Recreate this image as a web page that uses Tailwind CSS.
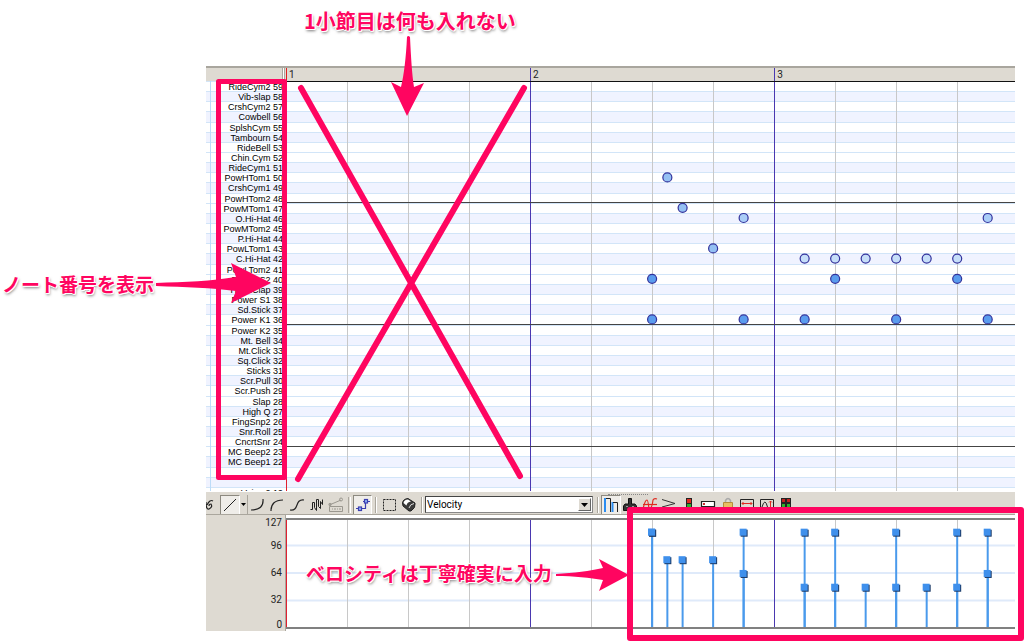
<!DOCTYPE html>
<html lang="ja">
<head>
    <meta charset="UTF-8">
    <meta name="viewport" content="width=device-width, initial-scale=1.0">
    <title>ドラムの打ち込み</title>
    <script src="https://cdn.jsdelivr.net/npm/@tailwindcss/browser@4"></script>
</head>
<body class="relative min-h-screen bg-white overflow-hidden font-['Roboto','Noto_Sans_CJK_JP',sans-serif] text-[#222]">

    <main class="ml-[206px] mr-[9px] pt-[66px]">

        <!-- Ruler -->
        <header class="flex h-[15px] bg-[#dedad2] border-t-2 border-[#a9a69e] text-[10px] leading-[13px]">
            <div class="w-20 shrink-0 flex justify-end pr-px">
                <span class="w-[3px] border-x border-x-[#aaa69d] bg-white"></span>
            </div>
            <div class="grow flex overflow-hidden">
                <span class="w-[33.48%] shrink-0 border-l border-[#e02020] pl-[2px]">1</span>
                <span class="w-[33.48%] shrink-0 border-l border-[#4a38b0] pl-[2px]">2</span>
                <span class="w-[33.48%] shrink-0 border-l border-[#4a38b0] pl-[2px]">3</span>
            </div>
        </header>

        <!-- Piano roll -->
        <section class="relative isolate h-[410px] overflow-hidden">
            <ul id="rows" class="h-[416px] grid grid-rows-[repeat(41,minmax(0,1fr))]"></ul>
            <div class="absolute inset-y-0 left-1 w-px bg-[#bcdcf8]"></div>
            <div class="absolute top-0 left-20 right-0 h-[416px]">
                <svg id="roll" class="block w-full h-full"></svg>
            </div>
        </section>

        <!-- Toolbar -->
        <div class="relative flex h-6 pt-[3px] items-center bg-[#dedad2] border-t border-t-white border-b border-b-[#aaa69d] overflow-hidden">
            <div class="absolute top-[2px] left-[402px] w-[40px] border-t border-dotted border-[#888]"></div>
            <button aria-label="Freehand" class="w-3 mr-[2px] h-5 shrink-0">
                <svg class="block w-3 h-5" viewBox="0 0 12 20" fill="none" stroke="#222" stroke-width="1.2"><path d="M0 7 Q0 15 3 14 Q7 12 5 9 Q3 9 3 11 M1 10 Q4 4 7 6"/></svg>
            </button>
            <button aria-label="Line" class="w-5 h-5 shrink-0 bg-[#efede9] border border-t-[#8c8980] border-l-[#8c8980] border-white">
                <svg class="block w-[18px] h-[18px]" viewBox="0 0 18 18" stroke="#222" stroke-width="1"><path d="M3 15 L15 3"/></svg>
            </button>
            <button aria-label="Line options" class="w-2 h-5 shrink-0 border-r border-[#aaa69d] flex items-center justify-center">
                <svg class="w-[5px] h-[3px]" viewBox="0 0 5 3"><path d="M0 0 H5 L2.5 3Z"/></svg>
            </button>
            <div class="grid grid-cols-5 w-[98px] h-5 shrink-0">
                <button aria-label="Curve in"><svg class="block mx-auto w-[18px] h-5" viewBox="0 0 18 20" fill="none" stroke="#222" stroke-width="1.2"><path d="M2 15 Q15 15 14 4"/></svg></button>
                <button aria-label="Curve out"><svg class="block mx-auto w-[18px] h-5" viewBox="0 0 18 20" fill="none" stroke="#222" stroke-width="1.2"><path d="M3 16 Q3 5 15 5"/></svg></button>
                <button aria-label="S curve"><svg class="block mx-auto w-[18px] h-5" viewBox="0 0 18 20" fill="none" stroke="#222" stroke-width="1.2"><path d="M2 15 C12 16 6 4 16 5"/></svg></button>
                <button aria-label="Random"><svg class="block mx-auto w-[18px] h-5" viewBox="0 0 18 20" fill="none" stroke="#222"><path d="M2.500 14.500 H4.500 V7.500 H6.500 V12.500 L8.500 15.500 V4.500 H10.500 V11.500 L12.500 13.500 V6.500 L14.500 9.500 V4.500"/></svg></button>
                <button aria-label="Edit list" disabled><svg class="block mx-auto w-[18px] h-5" viewBox="0 0 18 20" fill="none" stroke="#9a978f"><path d="M2.500 11.500 H15.500 V16.500 H2.500Z M2 10 L7 8 L14 5"/><circle cx="3" cy="9.500" r="1.200"/><circle cx="14" cy="4.500" r="1.500"/><path d="M5 14 H6 M8 13 V15 M10 14 H11 M13 13 V15"/></svg></button>
            </div>
            <span class="mx-[2px] w-[3px] h-4 shrink-0 border-x border-l-[#aaa69d] border-r-white"></span>
            <button aria-label="Connect" class="w-[19px] h-5 shrink-0 bg-[#efede9] border border-t-[#8c8980] border-l-[#8c8980] border-white">
                <svg class="block w-[17px] h-[18px]" viewBox="0 0 17 18" fill="none" stroke="#3b3fb0" stroke-width="1.2"><path d="M2 12.500 H5 M8 12.500 H11.500 V7 M13 5.500 H16 M9 5.500 H11"/><rect x="4.500" y="11" width="3" height="3.500" fill="#8fb4f8"/><rect x="10.500" y="3.500" width="3" height="3.500" fill="#8fb4f8"/></svg>
            </button>
            <span class="mx-[3px] w-[2px] h-4 shrink-0 border-x border-l-[#aaa69d] border-r-white"></span>
            <div class="grid grid-cols-2 w-[39px] h-5 shrink-0">
                <button aria-label="Select"><svg class="block mx-auto w-[18px] h-5" viewBox="0 0 18 20" fill="none" stroke="#222" stroke-dasharray="2 1"><rect x="2.500" y="4.500" width="12" height="11"/></svg></button>
                <button aria-label="Erase"><svg class="block mx-auto w-[18px] h-5" viewBox="0 0 18 20" stroke="#222"><path d="M2.500 8 Q3 4 8 3.500 L15 8 Q16 13 11 16 L9 16 L3 11Z" fill="#3a3a3a"/><path d="M3.500 8 Q4 4.500 8 4.500 L11 6.500 Q7 7 6.500 10.500Z" fill="#fff" stroke="none"/><path d="M9 13 Q10 9 14 8.500" fill="none" stroke="#ddd"/></svg></button>
            </div>
            <span class="mx-[2px] w-[2px] h-4 shrink-0 border-x border-l-[#aaa69d] border-r-white"></span>
            <div class="relative w-[168px] h-[17px] shrink-0">
                <label for="lane" class="sr-only">Controller</label>
                <select id="lane" class="block appearance-none w-full h-full bg-white border border-[#888] border-t-[#444] border-l-[#444] pl-px text-[10px] leading-[13px] text-black">
                    <option>Velocity</option>
                </select>
                <span class="absolute right-[2px] top-[2px] w-[13px] h-[13px] bg-[#dedad2] border border-[#fff] border-r-[#666] border-b-[#666] flex items-center justify-center pointer-events-none">
                    <svg class="w-[7px] h-1" viewBox="0 0 7 4"><path d="M0 0 H7 L3.500 4Z"/></svg>
                </span>
            </div>
            <span class="ml-1 mr-[2px] w-[2px] h-4 shrink-0 border-x border-l-[#aaa69d] border-r-white"></span>
            <div class="grid grid-cols-10 w-[195px] h-5 shrink-0">
                <button aria-label="Velocity lane" class="bg-[#efede9] border border-t-[#8c8980] border-l-[#8c8980] border-white"><svg class="block mx-auto w-[18px] h-[18px]" viewBox="0 0 18 18" fill="none"><path d="M3 16 V2" stroke="#2a8cf0" stroke-width="2"/><path d="M4 2.500 H8.500 V16" stroke="#222"/><path d="M10.500 16 V6" stroke="#2a8cf0" stroke-width="2"/><path d="M11 6.500 H15.500 V16" stroke="#222"/></svg></button>
                <button aria-label="Pitch bend"><svg class="block mx-auto w-[18px] h-5" viewBox="0 0 18 20" fill="#333" stroke="#111"><path d="M7.500 3.500 H10.500 V9 H14 L15.500 11 V15.500 H2.500 V11 L4 9 H7.500Z"/><path d="M5 11.500 H7 M11 11.500 H13" stroke="#999"/></svg></button>
                <button aria-label="Modulation"><svg class="block mx-auto w-[18px] h-5" viewBox="0 0 18 20" fill="none" stroke="#e02a20" stroke-width="1.200"><path d="M2 14 Q4 5 6 5 Q7 5 8 14 Q11 14 12 5 Q13 3 16 4"/><path d="M2 9.500 H16"/></svg></button>
                <button aria-label="Volume"><svg class="block mx-auto w-[18px] h-5" viewBox="0 0 18 20" fill="none" stroke="#333"><path d="M2 4.500 L15 8.500 L2 12"/></svg></button>
                <button aria-label="Level"><svg class="block mx-auto w-[18px] h-5" viewBox="0 0 18 20"><path d="M6 3 H12 V18 H6Z" fill="#222"/><path d="M7 4 H11 V8 H7Z" fill="#e02a20"/><path d="M7 9 H11 V16 H7Z" fill="#2bb32b"/></svg></button>
                <button aria-label="Pan"><svg class="block mx-auto w-[18px] h-5" viewBox="0 0 18 20" fill="#fff" stroke="#222" stroke-width="1.200"><path d="M2.500 6.500 H15.500 V11.500 H2.500Z"/><path d="M4 8 H6 V10 H4Z" fill="#cc3030" stroke="none"/></svg></button>
                <button aria-label="Lock"><svg class="block mx-auto w-[18px] h-5" viewBox="0 0 18 20" fill="#e8bd62" stroke="#b58a3a"><path d="M6.500 8 V5.500 Q9 1.500 11.500 5.500 V8" fill="none" stroke="#aaa" stroke-width="1.500"/><path d="M4.500 7.500 H13.500 V14.500 H4.500Z"/></svg></button>
                <button aria-label="Range"><svg class="block mx-auto w-[18px] h-5" viewBox="0 0 18 20" fill="none" stroke="#222"><path d="M2.500 4.500 H15.500 V14.500 H2.500Z"/><path d="M4 8.500 H14 M5.500 7 L4 8.500 L5.500 10 M12.500 7 L14 8.500 L12.500 10" stroke="#e02a20"/></svg></button>
                <button aria-label="Shape"><svg class="block mx-auto w-[18px] h-5" viewBox="0 0 18 20" fill="none" stroke="#222"><path d="M2.500 4.500 H15.500 V14.500 H2.500Z M4 12 Q7 2 9.500 12"/><path d="M12.500 6 V12 M11 7.500 L12.500 6 L14 7.500" stroke="#e02a20"/></svg></button>
                <button aria-label="Meters"><svg class="block mx-auto w-[18px] h-5" viewBox="0 0 18 20"><path d="M4 3 H14 V17 H4Z" fill="#222"/><path d="M5 4 H8 V7 H5Z M10 4 H13 V7 H10Z" fill="#c02020"/><path d="M5 9 H8 V15 H5Z M10 9 H13 V15 H10Z" fill="#2bb32b"/></svg></button>
            </div>
        </div>

        <!-- Velocity -->
        <section class="flex h-[116px]">
            <div class="w-20 shrink-0 bg-[#dedad2] border-r border-[#aaa69d] pr-[3px] pt-[2px] flex flex-col text-right text-[10px] leading-[11px]">
                <span class="h-[23px]">127</span>
                <span class="h-[27px]">96</span>
                <span class="h-[27px]">64</span>
                <span class="h-[25px]">32</span>
                <span>0</span>
            </div>
            <div class="grow pt-[3px]">
                <svg id="velocity" class="block w-full h-[111px]"></svg>
            </div>
        </section>
    </main>

    <!-- Notes for the reader, over the editor -->
    <svg class="absolute top-0 left-0 w-[1024px] h-[642px] pointer-events-none" viewBox="0 0 1024 642" fill="none" stroke="#ff0560">
        <g stroke-width="6" stroke-linecap="round" stroke-linejoin="round">
            <path d="M301 88 L520 476 M524 88 L298 479"/>
            <rect x="218.500" y="81.500" width="66" height="396" stroke-width="5"/>
            <rect x="630" y="510" width="391" height="128"/>
        </g>
        <g fill="#ff0560" stroke="none">
            <path d="M407 37 Q408 35 410 37 C411 58 412 74 414 87 L424 83 L407 116 L391 82 L401 87 C404 74 406 58 407 37Z"/>
            <path d="M156 283 C185 282 212 281 236 277 L231 263 L271 283 L231 303 L236 291 C212 288 185 287 156 286Z"/>
            <path d="M556 574 C574 573 590 571 603 568 L599 559 L629 575 L599 591 L603 580 C590 578 574 576 556 576Z"/>
        </g>
    </svg>
    <div class="text-[#ff0560] font-bold whitespace-nowrap font-['Noto_Sans_CJK_JP',sans-serif] [text-shadow:1px_0_white,-1px_0_white,0_1px_white,0_-1px_white,1px_1px_white,-1px_-1px_white,1px_2px_3px_#777]">
        <p class="absolute top-[6px] left-[304px] text-[20px] leading-[30px]">1小節目は何も入れない</p>
        <p class="absolute top-[269px] left-[2px] text-[19px] leading-[30px]">ノート番号を表示</p>
        <p class="absolute top-[558px] left-[306px] text-[19px] leading-[30px]">ベロシティは丁寧確実に入力</p>
    </div>

    <script>
        const TOP = 59, ROWS = 41;
        const BEAT = 8.37; // width of one beat, in percent
        const names = [
            'RideCym2', 'Vib-slap', 'CrshCym2', 'Cowbell', 'SplshCym', 'Tambourn', 'RideBell', 'Chin.Cym',
            'RideCym1', 'PowHTom1', 'CrshCym1', 'PowHTom2', 'PowMTom1', 'O.Hi-Hat', 'PowMTom2', 'P.Hi-Hat',
            'PowLTom1', 'C.Hi-Hat', 'PowLTom2', 'Power S2', 'HandClap', 'Power S1', 'Sd.Stick', 'Power K1',
            'Power K2', 'Mt. Bell', 'Mt.Click', 'Sq.Click', 'Sticks', 'Scr.Pull', 'Scr.Push', 'Slap',
            'High Q', 'FingSnp2', 'Snr.Roll', 'CncrtSnr', 'MC Beep2', 'MC Beep1', '', '', 'Voice 2'
        ];
        // [beat, note, velocity]
        const notes = [
            [6, 40, 112], [6, 36, 112], [6.25, 50, 80], [6.5, 47, 80], [7, 43, 80], [7.5, 46, 64], [7.5, 36, 112],
            [8.5, 42, 48], [8.5, 36, 112], [9, 42, 48], [9, 40, 112], [9.5, 42, 48], [10, 42, 48], [10, 36, 112],
            [10.5, 42, 48], [11, 42, 48], [11, 40, 112], [11.5, 46, 64], [11.5, 36, 112]
        ];
        const fills = { 112: '#5a9cee', 80: '#94c0f3', 64: '#aacdf7', 48: '#c6def9' };

        // Rows, black keys shaded
        let html = '';
        for (let i = 0; i < ROWS; i++) {
            const note = TOP - i;
            const black = [1, 3, 6, 8, 10].includes(note % 12);
            const label = names[i] ? `${names[i]} ${note}` : '';
            html += `<li class="border-t border-[#d2e5f8] ${black ? 'bg-[#f0f3ff]' : 'bg-white'}">
                <span class="relative z-10 block w-[77px] text-right font-['Liberation_Sans',sans-serif] text-[9px] leading-[10px] text-black whitespace-nowrap">${label}</span></li>`;
        }
        document.getElementById('rows').innerHTML = html;

        function beatLines() {
            let out = '';
            for (let b = 1; b < 12; b++) {
                out += `<line x1="${b * BEAT}%" x2="${b * BEAT}%" y1="0" y2="100%" stroke="${b % 4 ? '#c8c8c8' : '#4a38b0'}" shape-rendering="crispEdges"/>`;
            }
            return out + '<line x1="0.5" x2="0.5" y1="0" y2="100%" stroke="#e02030"/>';
        }

        // Notes
        let roll = beatLines() + '<line x1="0" x2="100%" y1="0" y2="0" stroke="#111" stroke-width="2"/>';
        for (const n of [48, 36, 24]) {
            const y = (TOP - n + 1) / ROWS * 100;
            roll += `<line x1="0" x2="100%" y1="${y}%" y2="${y}%" stroke="#444" shape-rendering="crispEdges"/>`;
        }
        for (const [beat, note, vel] of notes) {
            roll += `<circle cx="${beat * BEAT}%" cy="${(TOP - note + 0.5) / ROWS * 100}%" r="4.5" fill="${fills[vel]}" stroke="#32329c" stroke-width="1.2"/>`;
        }
        document.getElementById('roll').innerHTML = roll;

        // Velocity bars
        let vels = '';
        for (const v of [32, 64, 96]) {
            vels += `<line x1="0" x2="100%" y1="${110 - v * 0.86}" y2="${110 - v * 0.86}" stroke="#dfeafa" stroke-width="2"/>`;
        }
        vels += beatLines();
        vels += '<line x1="0" x2="100%" y1="1" y2="1" stroke="#808080" stroke-width="2"/><line x1="0" x2="100%" y1="110" y2="110" stroke="#808080" stroke-width="2"/>';
        for (const [beat, , vel] of notes) {
            vels += `<line x1="${beat * BEAT}%" x2="${beat * BEAT}%" y1="${110 - vel * 0.86}" y2="109" stroke="#4a9aec" stroke-width="2"/>`;
        }
        for (const [beat, , vel] of notes) {
            const y = 111 - vel * 0.86;
            vels += `<svg x="${beat * BEAT}%" y="${y}" overflow="visible"><rect x="-3" y="-3" width="7" height="7" fill="#1c3a66"/><rect x="-4" y="-4" width="7" height="7" fill="#3f90ec"/></svg>`;
        }
        document.getElementById('velocity').innerHTML = vels;
    </script>
</body>
</html>
